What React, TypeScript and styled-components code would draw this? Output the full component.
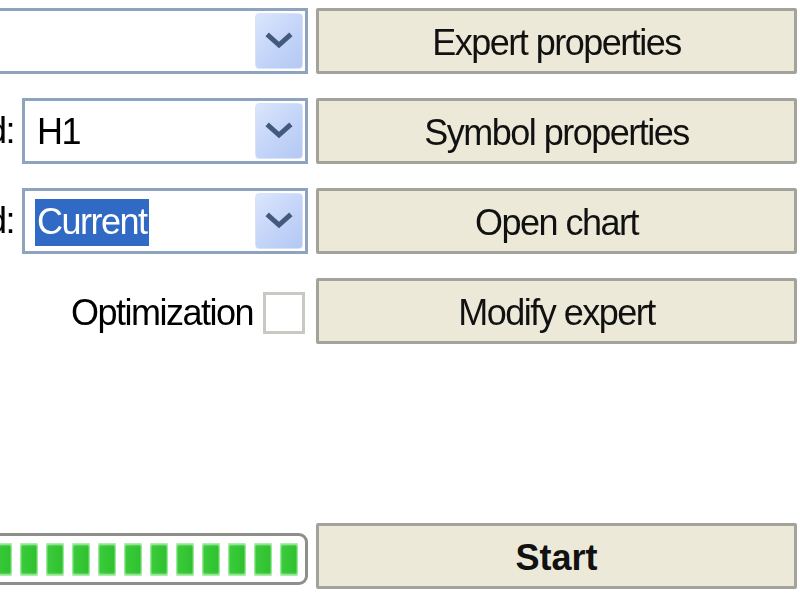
import React from 'react'
import styled, { createGlobalStyle } from 'styled-components'

const GlobalStyle = createGlobalStyle`
	html, body {
		margin: 0;
		padding: 0;
		background: #ffffff;
		overflow: hidden;
	}
	body {
		font-family: 'Liberation Sans', Arial, sans-serif;
		color: #000;
	}
`

const Panel = styled.div`
	width: 800px;
	height: 600px;
	overflow: hidden;
	filter: blur(0.5px);
`

const Grid = styled.div`
	display: grid;
	grid-template-columns: 121px 286px 481px;
	grid-template-rows: repeat(4, 66px) 131px 66px;
	column-gap: 8px;
	row-gap: 24px;
	padding-top: 8px;
	margin-left: -107px;
	font-size: 36px;
	letter-spacing: -1.5px;
`

const Label = styled.div`
	display: flex;
	align-items: center;
	justify-content: flex-end;
	white-space: nowrap;
`

const Combo = styled.div<{ $wide?: boolean }>`
	grid-column: ${(p) => (p.$wide ? '1 / span 2' : 'auto')};
	box-sizing: border-box;
	display: flex;
	align-items: center;
	border: 3px solid #8ea3bd;
	background: #fff;
	padding: 2px 2px 2px 10px;
`

const ComboText = styled.span<{ $selected?: boolean }>`
	flex: 1;
	display: flex;
	align-items: center;
	padding-top: 2px;
	span {
		padding: 2px 2px 3px 2px;
		background: ${(p) => (p.$selected ? '#316ac5' : 'transparent')};
		color: ${(p) => (p.$selected ? '#fff' : '#000')};
	}
`

const DropButton = styled.div`
	width: 48px;
	align-self: stretch;
	box-sizing: border-box;
	border-radius: 4px;
	border: 1px solid #d8e3fb;
	background: linear-gradient(135deg, #dbe6fd 0%, #c3d4f8 55%, #b4c8f3 100%);
	display: flex;
	align-items: center;
	justify-content: center;
`

const Button = styled.div<{ $bold?: boolean }>`
	box-sizing: border-box;
	border: 3px solid #a3a39b;
	border-radius: 2px;
	background: #ece9d8;
	display: flex;
	align-items: center;
	justify-content: center;
	padding-top: 3px;
	font-weight: ${(p) => (p.$bold ? 700 : 400)};
	letter-spacing: ${(p) => (p.$bold ? '0' : '-1.5px')};
	color: #111;
`

const OptionCell = styled.div`
	grid-column: 1 / span 2;
	display: flex;
	align-items: center;
	justify-content: flex-end;
	gap: 10px;
	padding-right: 3px;
	padding-top: 4px;
`

const CheckBox = styled.div`
	width: 42px;
	height: 42px;
	box-sizing: border-box;
	border: 3px solid #c9c9c4;
	background: #fff;
`

const Spacer = styled.div`
	grid-column: 1 / span 3;
`

const Progress = styled.div`
	grid-column: 1 / span 2;
	align-self: start;
	margin-top: 10px;
	height: 52px;
	box-sizing: border-box;
	border: 3px solid #8e8e8a;
	border-radius: 9px;
	background: #fff;
	padding: 7px 7px 6px 0;
	display: flex;
	justify-content: flex-end;
	gap: 8px;
	overflow: hidden;
`

const Segment = styled.div`
	flex: 0 0 18px;
	min-width: 18px;
	border-radius: 2px;
	background: linear-gradient(90deg, #9ee89e 0%, #3acb3a 12%, #2fc12f 88%, #9ee89e 100%);
	box-shadow: inset 0 2px 2px #b2f0b2, inset 0 -2px 2px #b2f0b2;
`

const Chevron = () => (
	<svg width="28" height="18" viewBox="0 0 28 18">
		<polyline
			points="4,4 14,13 24,4"
			fill="none"
			stroke="#44597e"
			strokeWidth="5"
			strokeLinecap="square"
		/>
	</svg>
)

const App: React.FC = () => {
	const segments = Array.from({ length: 14 })
	return (
		<Panel>
			<GlobalStyle />
			<Grid>
				<Combo $wide>
					<ComboText />
					<DropButton>
						<Chevron />
					</DropButton>
				</Combo>
				<Button>Expert properties</Button>

				<Label>Period:</Label>
				<Combo>
					<ComboText>
						<span>H1</span>
					</ComboText>
					<DropButton>
						<Chevron />
					</DropButton>
				</Combo>
				<Button>Symbol properties</Button>

				<Label>Spread:</Label>
				<Combo>
					<ComboText $selected>
						<span>Current</span>
					</ComboText>
					<DropButton>
						<Chevron />
					</DropButton>
				</Combo>
				<Button>Open chart</Button>

				<OptionCell>
					Optimization
					<CheckBox />
				</OptionCell>
				<Button>Modify expert</Button>

				<Spacer />

				<Progress>
					{segments.map((_, i) => (
						<Segment key={i} />
					))}
				</Progress>
				<Button $bold>Start</Button>
			</Grid>
		</Panel>
	)
}

export default App
